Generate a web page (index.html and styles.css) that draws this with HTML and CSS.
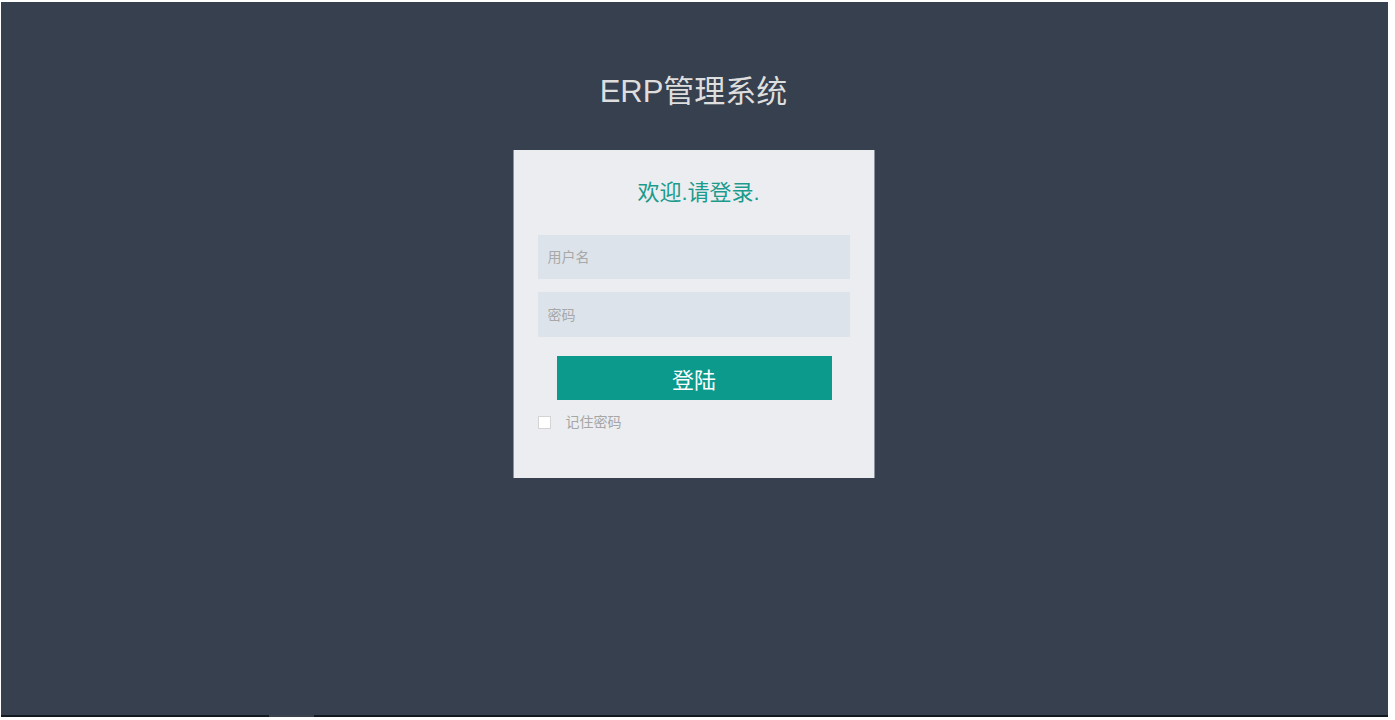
FILE: index.html
```html
<!DOCTYPE html>
<html lang="zh-CN">
<head>
<meta charset="utf-8">
<title>ERP管理系统</title>
<link rel="stylesheet" href="styles.css">
</head>
<body>
<div class="frame">
  <div class="screen">
    <h1 class="title">ERP管理系统</h1>
    <div class="card">
      <h3 class="welcome">欢迎.请登录.</h3>
      <form class="form">
        <input class="field" type="text" placeholder="用户名">
        <input class="field" type="password" placeholder="密码">
        <button class="submit" type="button">登陆</button>
        <label class="remember"><span class="box"></span><span class="remember-text">记住密码</span></label>
      </form>
    </div>
  </div>
  <div class="bottom-bar">
    <span class="bar-seg bar-left"></span>
    <span class="bar-seg bar-thumb"></span>
    <span class="bar-seg bar-right"></span>
  </div>
</div>
</body>
</html>
```
FILE: styles.css
```css
html, body {
  margin: 0;
  padding: 0;
  background: #ffffff;
}
body {
  font-family: "Liberation Sans", "Noto Sans CJK SC", sans-serif;
}
.frame {
  margin: 2px 0 0 1px;
  width: 1387px;
  display: flex;
  flex-direction: column;
}
.screen {
  height: 713px;
  background: #36404e;
  display: flex;
  flex-direction: column;
  align-items: center;
  box-sizing: border-box;
  padding-top: 70px;
  padding-right: 2px;
}
.title {
  margin: 0;
  font-weight: normal;
  font-size: 31px;
  line-height: 40px;
  height: 40px;
  color: #dedede;
}
.card {
  margin-top: 38px;
  width: 362px;
  height: 328px;
  box-sizing: border-box;
  background: #ebedf0;
  border-left: 1px solid #8a929d;
  border-right: 1px solid #8a929d;
  padding: 0 24px;
}
.welcome {
  margin: 28px 0 0;
  padding-left: 10px;
  font-weight: normal;
  font-size: 22px;
  line-height: 30px;
  text-align: center;
  color: #1b9b8d;
}
.form {
  margin-top: 27px;
  display: flex;
  flex-direction: column;
}
.field {
  display: block;
  width: 312px;
  height: 44px;
  box-sizing: border-box;
  border: none;
  outline: none;
  background: #dde3ea;
  padding: 0 10px;
  font-family: "Liberation Sans", "Noto Sans CJK SC", sans-serif;
  font-size: 14px;
  color: #555;
  margin: 0 0 13px;
}
.field::placeholder {
  color: #a8a8a8;
}
.field + .field {
  height: 45px;
  margin-bottom: 19px;
}
.submit {
  align-self: flex-start;
  margin-left: 19px;
  width: 275px;
  height: 44px;
  border: none;
  background: #0c9a8d;
  color: #ffffff;
  font-family: "Liberation Sans", "Noto Sans CJK SC", sans-serif;
  font-size: 22px;
  padding: 0;
  cursor: pointer;
}
.remember {
  margin-top: 16px;
  display: flex;
  align-items: center;
  height: 13px;
}
.box {
  width: 13px;
  height: 13px;
  box-sizing: border-box;
  border: 1px solid #d4d4d4;
  background: #ffffff;
}
.remember-text {
  margin-left: 15px;
  font-size: 14px;
  color: #a6a6a6;
  line-height: 13px;
}
.bottom-bar {
  display: flex;
  height: 2px;
}
.bar-seg {
  display: block;
  height: 2px;
}
.bar-left {
  width: 268px;
  background: #111a20;
}
.bar-thumb {
  width: 45px;
  background: #3a434d;
}
.bar-right {
  flex: 1;
  background: #111a20;
}
```
